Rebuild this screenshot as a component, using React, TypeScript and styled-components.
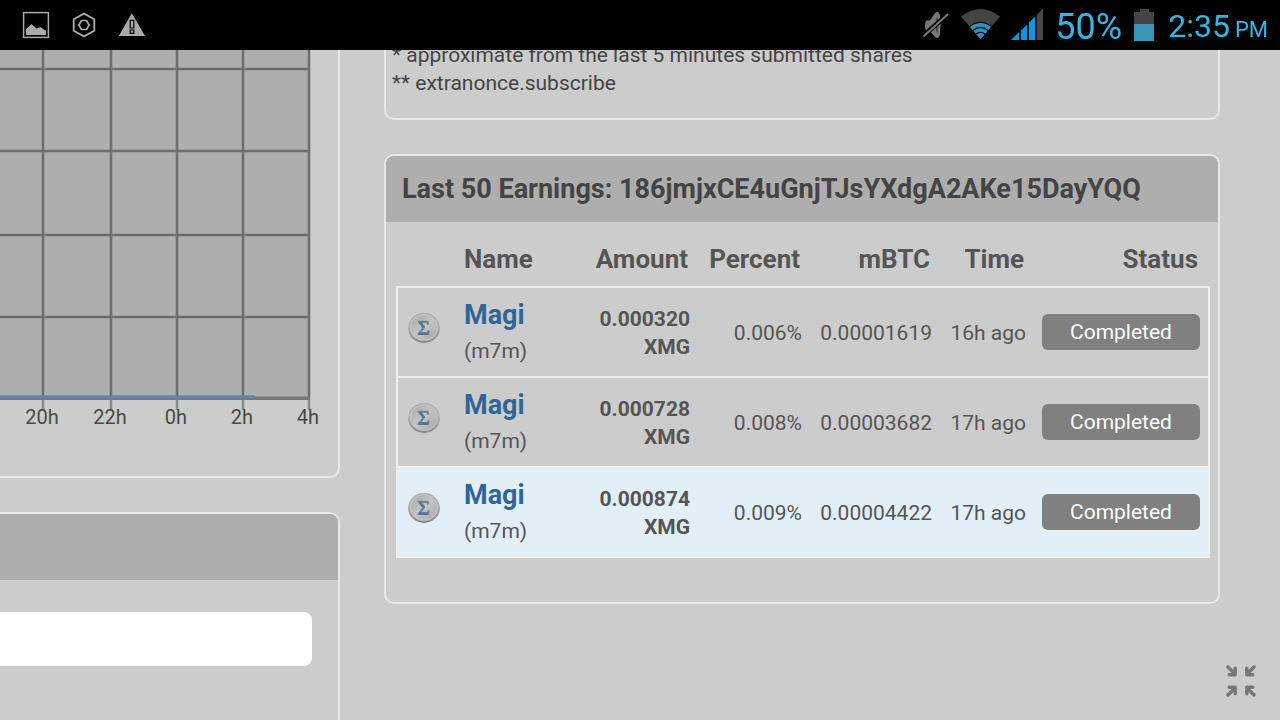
import React from "react";
import styled, { createGlobalStyle } from "styled-components";

const GlobalStyle = createGlobalStyle`
  *, *::before, *::after { box-sizing: border-box; }
  body {
    margin: 0;
    background: #ccc;
    color: #444;
    font-family: Roboto, "Liberation Sans", sans-serif;
    font-size: 21px;
    line-height: 28px;
  }
`;

const StatusBar = styled.header`
  position: fixed;
  inset: 0 0 auto 0;
  z-index: 2;
  height: 50px;
  padding: 0 12px 0 22px;
  display: flex;
  justify-content: space-between;
  background: #000;
  color: #33b5e5;
`;

const Notifications = styled.div`
  display: flex;
  align-items: center;
  gap: 21px;
`;

const Indicators = styled.div`
  display: flex;
  align-items: center;
  gap: 12px;
`;

const BatteryLevel = styled.span`
  font-size: 36px;
  line-height: 54px;
  align-self: flex-start;
`;

const Clock = styled.time`
  padding-left: 2px;
  font-size: 32px;
  line-height: 52px;
  align-self: flex-start;
  white-space: nowrap;
`;

const Meridiem = styled.span`
  margin-left: 5px;
  font-size: 22px;
`;

const Page = styled.main`
  min-height: 100vh;
  display: grid;
  grid-template-columns: 340px minmax(0, 1fr);
  gap: 44px;
  padding-right: 60px;
`;

const Column = styled.div`
  display: flex;
  flex-direction: column;
  gap: 34px;
`;

const Panel = styled.section`
  border: 2px solid #e8e8e8;
  border-radius: 10px;
  overflow: hidden;
`;

const ChartPanel = styled(Panel)`
  height: 478px;
  border-width: 0 2px 2px 0;
  border-radius: 0 0 10px 0;
`;

const FormPanel = styled(Panel)`
  flex: 1;
  border-width: 2px 2px 0 0;
  border-radius: 0 10px 0 0;
`;

const NotesPanel = styled(Panel)`
  border-top: 0;
  border-radius: 0 0 10px 10px;
  padding: 41px 6px 21px;
`;

const EarningsPanel = styled(Panel)`
  padding-bottom: 44px;
`;

const Note = styled.p`
  margin: 0;
`;

const PanelTitle = styled.h2`
  height: 66px;
  margin: 0;
  padding: 0 16px;
  background: #aeaeae;
  font-size: 27px;
  font-weight: 700;
  line-height: 66px;
  white-space: nowrap;
`;

const Field = styled.div`
  padding: 32px 26px 0 0;
`;

const TextBox = styled.input`
  display: block;
  width: 100%;
  height: 54px;
  padding: 0 16px;
  border: 0;
  border-radius: 0 8px 8px 0;
  background: #fff;
  font: inherit;
`;

const ChartDrawing = styled.svg`
  display: block;
`;

const TableFrame = styled.div`
  padding: 0 8px 0 10px;
`;

const Table = styled.table`
  width: 100%;
  table-layout: fixed;
  border-collapse: separate;
  border-spacing: 0;
  color: #555;
`;

const Col = styled.col<{ $w?: number }>`
  width: ${(p) => (p.$w ? `${p.$w}px` : "auto")};
`;

const HeadCell = styled.th<{ $left?: boolean }>`
  height: 66px;
  padding: 10px 10px 0 8px;
  border-bottom: 2px solid #eee;
  font-size: 26px;
  text-align: ${(p) => (p.$left ? "left" : "right")};
  white-space: nowrap;
  &:last-child { padding-right: 12px; }
`;

const Row = styled.tr<{ $active?: boolean }>`
  background: ${(p) => (p.$active ? "#e3eff7" : "transparent")};
`;

const Cell = styled.td<{ $left?: boolean; $strong?: boolean }>`
  height: 90px;
  padding: 9px 8px 7px;
  border-bottom: 2px solid #eee;
  font-weight: ${(p) => (p.$strong ? 700 : 400)};
  text-align: ${(p) => (p.$left ? "left" : "right")};
  white-space: nowrap;
  &:first-child { padding-left: 10px; border-left: 2px solid #eee; }
  &:last-child { border-right: 2px solid #eee; }
`;

const AmountCell = styled(Cell)`
  white-space: normal;
`;

const StatusCell = styled(Cell)`
  padding: 8px;
`;

const CoinLink = styled.a`
  display: block;
  color: #2f6699;
  font-size: 27px;
  font-weight: 700;
  line-height: 36px;
  text-decoration: none;
`;

const Algo = styled.span`
  display: block;
  line-height: 36px;
`;

const Badge = styled.span`
  display: block;
  border-radius: 6px;
  background: #808080;
  color: #fff;
  line-height: 36px;
  text-align: center;
`;

const CoinDrawing = styled.svg`
  display: block;
  margin-bottom: 10px;
`;

const ExitButton = styled.button`
  position: fixed;
  right: 24px;
  bottom: 23px;
  padding: 0;
  border: 0;
  background: none;
  color: #777;
  svg { display: block; }
`;

const CoinIcon = () => (
  <CoinDrawing width="32" height="32" viewBox="0 0 32 32" aria-hidden="true">
    <defs>
      <linearGradient id="coinRim" x1="0" y1="0" x2="0" y2="1">
        <stop offset="0" stopColor="#a8a8a8" />
        <stop offset="0.4" stopColor="#b4b4b4" />
        <stop offset="1" stopColor="#858585" />
      </linearGradient>
      <linearGradient id="coinFace" x1="0" y1="0" x2="1" y2="1">
        <stop offset="0" stopColor="#a8a8a8" />
        <stop offset="0.5" stopColor="#c4c4c4" />
        <stop offset="1" stopColor="#a5a5a5" />
      </linearGradient>
    </defs>
    <ellipse cx="16" cy="16" rx="16" ry="15" fill="url(#coinRim)" />
    <ellipse cx="16" cy="15.4" rx="13.5" ry="12.8" fill="url(#coinFace)" stroke="#c4c4c4" strokeWidth="1.2" />
    <path
      d="M20.2 12.4 19.6 9.8h-8.4l4.6 5.8-4.6 5.8h8.8l.8-3"
      fill="none"
      stroke="#6786a0"
      strokeWidth="2.2"
    />
    <path d="m11.6 9.8 4.4 5.8M10.6 21.8h10" stroke="#4f7698" strokeWidth="2.6" />
  </CoinDrawing>
);

const hours = [
  { x: 43, label: "20h" },
  { x: 111, label: "22h" },
  { x: 177, label: "0h" },
  { x: 243, label: "2h" },
  { x: 309, label: "4h" },
];

const HashrateChart = () => (
  <ChartDrawing width="338" height="440" viewBox="0 0 338 440" role="img" aria-label="Hashrate">
    <rect width="309" height="398" fill="#aeaeae" />
    <g stroke="#6e6e6e" strokeWidth="2.5">
      {[69, 151, 235, 317].map((y) => (
        <path key={y} d={`M0 ${y}H310`} />
      ))}
      {hours.map(({ x }) => (
        <path key={x} d={`M${x} 0V398`} />
      ))}
    </g>
    <g stroke="#888" strokeWidth="2.5">
      {hours.map(({ x }) => (
        <path key={x} d={`M${x} 399V410`} />
      ))}
    </g>
    <path d="M0 398.2H310" stroke="#777" strokeWidth="3.6" />
    <path d="M0 396.8H255" stroke="#6685b0" strokeWidth="3" />
    <g fill="#484848" fontSize="20" textAnchor="middle">
      {hours.map(({ x, label }) => (
        <text key={x} x={x - 1} y="424">{label}</text>
      ))}
    </g>
  </ChartDrawing>
);

const PictureIcon = () => (
  <svg width="28" height="28" viewBox="0 0 28 28" aria-hidden="true">
    <rect x="1.6" y="1.6" width="24.8" height="24.8" fill="none" stroke="#aaa" strokeWidth="1.5" />
    <path d="M4 24v-6l5.5-5 5 4.5 4-1.5 5.5 4v4z" fill="#aaa" />
  </svg>
);

const HexIcon = () => (
  <svg width="26" height="28" viewBox="0 0 26 28" fill="none" stroke="#aaa" strokeLinejoin="round" aria-hidden="true">
    <path d="m13 2.6 10.3 5.6v11.6L13 25.4 2.7 19.8V8.2z" strokeWidth="1.8" />
    <path d="m10.5 9.5h5l2.6 4.5-2.6 4.5h-5L7.9 14z" strokeWidth="1.7" />
  </svg>
);

const WarningIcon = () => (
  <svg width="28" height="28" viewBox="0 0 28 28" aria-hidden="true">
    <path d="M13.8 2.2 27 25H.8z" fill="#aaa" />
    <path d="M12.2 9.4h3.6v7.6h-3.6zM12.2 19h3.6v3.4h-3.6z" fill="#aaa" stroke="#000" strokeWidth="1.2" />
  </svg>
);

const MuteIcon = () => (
  <svg width="28" height="30" viewBox="0 0 28 30" aria-hidden="true">
    <path d="M5 10.5h4L14 3q4-3 5 3 1.2 9 0 18-1 6-5 3L9 21H5q-2-5 0-10.5z" fill="#777" />
    <path d="M16 6q3 8.5 0 18-3-8 0-18z" fill="#4a4a4a" />
    <path d="M1 27 27 4" stroke="#000" strokeWidth="4.6" />
    <path d="M2.5 26.5 27 4" stroke="#777" strokeWidth="2" />
  </svg>
);

const WifiIcon = () => (
  <svg width="38" height="32" viewBox="0 0 38 32" overflow="visible" aria-hidden="true">
    <path d="M0 7.5q19.5-15 39 0L19.5 30z" fill="#444" />
    <path d="M9 18q10.5-8.2 21 0L19.5 30z" fill="#2f93bd" />
    <path d="M12 21.4q7.5-6 15 0M15 25q4.5-3.2 9 0" fill="none" stroke="#000" strokeWidth="1.3" />
    <path d="M8.4 17.4q11.1-8.4 22.2 0" fill="none" stroke="#000" strokeWidth="1" />
  </svg>
);

const SignalIcon = () => (
  <svg width="32" height="32" viewBox="0 0 32 32" aria-hidden="true">
    <path d="M0 31 8 23v8zM10 21.500l6-6V31h-6zM18 13.500l6-6V31h-6z" fill="#0099e5" />
    <path d="m26 5.500 6-6V31h-6z" fill="#484848" />
  </svg>
);

const BatteryIcon = () => (
  <svg width="20" height="32" viewBox="0 0 20 32" aria-hidden="true">
    <path d="M6 0h9v3h5v13H0V3h6z" fill="#444" />
    <path d="M0 15h20v17H0z" fill="#3a94b8" />
  </svg>
);

const CollapseIcon = () => (
  <svg
    width="30"
    height="32"
    viewBox="0 0 30 32"
    fill="currentColor"
    stroke="currentColor"
    strokeWidth="3.4"
    strokeLinecap="round"
    strokeLinejoin="round"
    aria-hidden="true"
  >
    <path d="m2 2 6 6M9.200 3.200v6.600H3.200M28 2l-6 6M20.800 3.200v6.600h6M2 30l6-6M9.200 28.800v-6.600H3.200M28 30l-6-6M20.800 28.800v-6.600h6" fill="none" />
  </svg>
);

const earnings = [
  { amount: "0.000320", percent: "0.006%", mbtc: "0.00001619", time: "16h ago" },
  { amount: "0.000728", percent: "0.008%", mbtc: "0.00003682", time: "17h ago" },
  { amount: "0.000874", percent: "0.009%", mbtc: "0.00004422", time: "17h ago", active: true },
];

const EarningsTable = () => (
  <Table>
    <colgroup>
      <Col $w={60} />
      <Col />
      <Col $w={122} />
      <Col $w={112} />
      <Col $w={130} />
      <Col $w={94} />
      <Col $w={176} />
    </colgroup>
    <thead>
      <tr>
        <HeadCell aria-label="Coin" />
        <HeadCell $left>Name</HeadCell>
        <HeadCell>Amount</HeadCell>
        <HeadCell>Percent</HeadCell>
        <HeadCell>mBTC</HeadCell>
        <HeadCell>Time</HeadCell>
        <HeadCell>Status</HeadCell>
      </tr>
    </thead>
    <tbody>
      {earnings.map((e) => (
        <Row key={e.amount} $active={e.active}>
          <Cell $left><CoinIcon /></Cell>
          <Cell $left>
            <CoinLink href="#magi">Magi</CoinLink>
            <Algo>(m7m)</Algo>
          </Cell>
          <AmountCell $strong>{e.amount} XMG</AmountCell>
          <Cell>{e.percent}</Cell>
          <Cell>{e.mbtc}</Cell>
          <Cell>{e.time}</Cell>
          <StatusCell><Badge>Completed</Badge></StatusCell>
        </Row>
      ))}
    </tbody>
  </Table>
);

export default function App() {
  return (
    <>
      <GlobalStyle />
      <StatusBar>
        <Notifications>
          <PictureIcon />
          <HexIcon />
          <WarningIcon />
        </Notifications>
        <Indicators>
          <MuteIcon />
          <WifiIcon />
          <SignalIcon />
          <BatteryLevel>50%</BatteryLevel>
          <BatteryIcon />
          <Clock>2:35<Meridiem>PM</Meridiem></Clock>
        </Indicators>
      </StatusBar>
      <Page>
        <Column>
          <ChartPanel><HashrateChart /></ChartPanel>
          <FormPanel>
            <PanelTitle as="div" />
            <Field><TextBox type="text" aria-label="Wallet address" /></Field>
          </FormPanel>
        </Column>
        <Column>
          <NotesPanel>
            <Note>* approximate from the last 5 minutes submitted shares</Note>
            <Note>** extranonce.subscribe</Note>
          </NotesPanel>
          <EarningsPanel>
            <PanelTitle>Last 50 Earnings: 186jmjxCE4uGnjTJsYXdgA2AKe15DayYQQ</PanelTitle>
            <TableFrame><EarningsTable /></TableFrame>
          </EarningsPanel>
        </Column>
      </Page>
      <ExitButton type="button" aria-label="Exit full screen"><CollapseIcon /></ExitButton>
    </>
  );
}
